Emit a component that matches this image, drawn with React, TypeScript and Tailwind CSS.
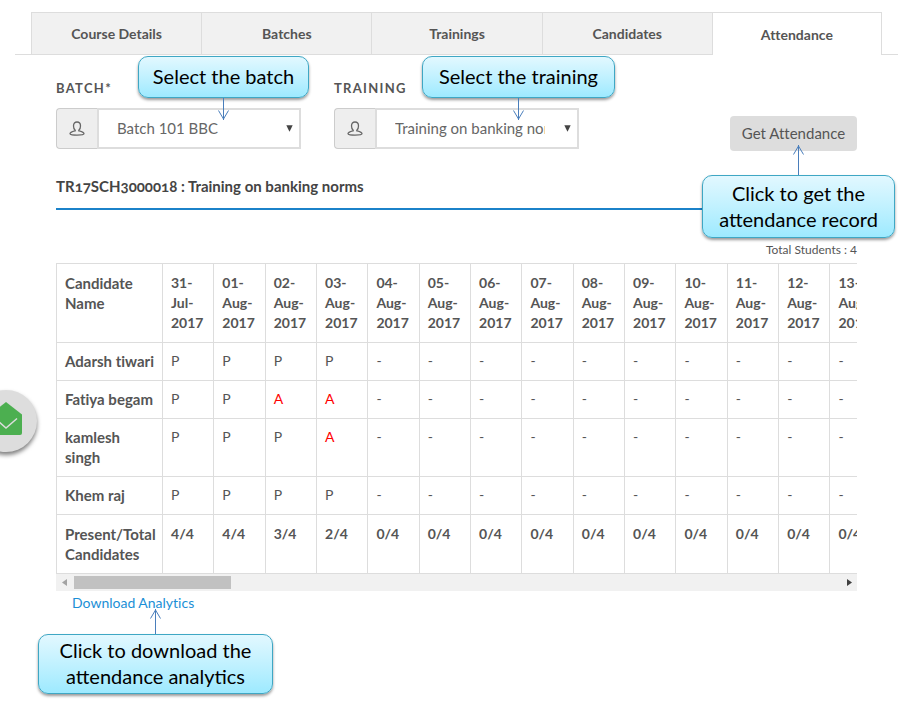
import type { ReactNode } from "react";

const TABS = ["Course Details", "Batches", "Trainings", "Candidates", "Attendance"];

const DAYS = [
  "31-Jul-2017",
  "01-Aug-2017",
  "02-Aug-2017",
  "03-Aug-2017",
  "04-Aug-2017",
  "05-Aug-2017",
  "06-Aug-2017",
  "07-Aug-2017",
  "08-Aug-2017",
  "09-Aug-2017",
  "10-Aug-2017",
  "11-Aug-2017",
  "12-Aug-2017",
  "13-Aug-2017",
];

const STUDENTS = [
  { name: "Adarsh tiwari", marks: "PPPP" },
  { name: "Fatiya begam", marks: "PPAA" },
  { name: "kamlesh singh", marks: "PPPA" },
  { name: "Khem raj", marks: "PPPP" },
];

const CELL = "border border-[#dddddd] pl-2 pb-[9px] text-left align-top";

function PersonIcon() {
  return (
    <svg width="16" height="16" viewBox="0 0 16 16" fill="none" stroke="#666666" strokeWidth="1.3" aria-hidden="true">
      <path d="M6.2 9.2C5 8.2 4.500 6.600 4.500 4.900C4.500 2.500 5.900 1 8 1s3.500 1.500 3.500 3.900c0 1.700-.5 3.300-1.700 4.300v.6c1.800.5 5.200 1.300 5.200 3c0 .9-3.200 1.300-7 1.300s-7-.4-7-1.300c0-1.700 3.400-2.500 5.200-3z" />
    </svg>
  );
}

function Field({ id, label, option }: { id: string; label: string; option: string }) {
  return (
    <div className="w-[245px]">
      <label htmlFor={id} className="block text-[13px] leading-5 font-bold tracking-widest text-[#555555]">
        {label}
      </label>
      <div className="mt-[10px] flex h-[41px]">
        <span className="flex w-[41px] shrink-0 items-center justify-center rounded-l border border-r-0 border-[#cccccc] bg-[#eeeeee]">
          <PersonIcon />
        </span>
        <div className="relative min-w-0 flex-1">
          <select
            id={id}
            className="h-full w-full appearance-none border-2 border-[#dddddd] bg-white pr-8 pl-[18px] text-[15px] text-[#666666]"
          >
            <option>{option}</option>
          </select>
          <svg className="pointer-events-none absolute top-[17px] right-[8px]" width="7" height="7" viewBox="0 0 7 7" aria-hidden="true">
            <path d="M0.300 0.300h6.400L3.500 6.700z" fill="#444444" />
          </svg>
        </div>
      </div>
    </div>
  );
}

function Callout({ className, children }: { className: string; children: ReactNode }) {
  return (
    <div
      className={
        "absolute flex items-center justify-center rounded-[10px] border border-[#3fa7c4] bg-linear-to-b from-[#e2f8ff] to-[#9deaff] pb-[2px] text-center text-[20px] leading-[26px] text-black shadow-[0_2px_3px_rgba(0,0,0,0.4)] " +
        className
      }
    >
      {children}
    </div>
  );
}

function Arrow({ className, height, up = false }: { className: string; height: number; up?: boolean }) {
  const head = up ? "M0.500 9.500L5.500 1L10.500 9.500" : `M0.500 ${height - 9.5}L5.500 ${height - 1}L10.500 ${height - 9.5}`;
  return (
    <svg className={"absolute " + className} width="11" height={height} fill="none" stroke="#4a7ebb" aria-hidden="true">
      <path d={`M5.500 0V${height}`} />
      <path d={head} />
    </svg>
  );
}

export default function App() {
  return (
    <div className="relative min-h-screen overflow-hidden bg-white pt-3 font-['Lato','Liberation_Sans',sans-serif] text-sm text-[#555555]">
      <nav className="mr-[2px] ml-[15px] border-b border-[#dddddd] px-4 [font-variant-ligatures:none]">
        <div className="-mb-px grid grid-cols-5">
          {TABS.map((tab) => (
            <button
              key={tab}
              type="button"
              className={
                tab === "Attendance"
                  ? "h-[43px] border border-b-0 border-[#dddddd] bg-white pt-[2px] font-bold"
                  : "h-[43px] border border-r-0 border-[#dddddd] bg-[#f1f1f1] font-bold"
              }
            >
              {tab}
            </button>
          ))}
        </div>
      </nav>

      <main className="mr-[43px] ml-14 pt-[23px] [font-variant-ligatures:none]">
        <form className="flex items-end gap-[33px]">
          <Field id="batch" label="BATCH*" option="Batch 101 BBC" />
          <Field id="training" label="TRAINING" option="Training on banking norms" />
          <button type="button" className="-mb-[2px] ml-auto h-[35px] w-[127px] rounded bg-[#dddddd] text-[15px] text-[#555555]">
            Get Attendance
          </button>
        </form>

        <h2 className="mt-[25px] border-b-2 border-[#1b82c9] pb-[10px] text-[15px] leading-6 font-bold text-[#444444] [font-variant-numeric:oldstyle-nums]">
          TR17SCH3000018 : Training on banking norms
        </h2>

        <p className="mt-[30px] text-right text-xs leading-5">Total Students : 4</p>

        <div className="mt-[3px] overflow-hidden">
          <table className="w-[826px] table-fixed border-collapse leading-5">
            <thead>
              <tr>
                <th className={CELL + " w-[106px] pt-[9px] pr-1 text-[15px] leading-5"}>Candidate Name</th>
                {DAYS.map((day) => (
                  <th key={day} className={CELL + " pt-[9px] pr-2"}>
                    {day}
                  </th>
                ))}
              </tr>
            </thead>
            <tbody>
              {STUDENTS.map((student) => (
                <tr key={student.name}>
                  <th className={CELL + " pt-2 pr-1 text-[15px] leading-5"}>{student.name}</th>
                  {DAYS.map((day, i) => {
                    const mark = student.marks[i] ?? "-";
                    return (
                      <td key={day} className={CELL + (mark === "A" ? " pt-2 pr-2 text-[#ff0000]" : " pt-2 pr-2")}>
                        {mark}
                      </td>
                    );
                  })}
                </tr>
              ))}
              <tr>
                <th className={CELL + " pt-[9px] pr-1 text-[15px] leading-5"}>Present/Total Candidates</th>
                {DAYS.map((day, i) => (
                  <th key={day} className={CELL + " pt-[9px] pr-2"}>
                    {STUDENTS.filter((student) => student.marks[i] === "P").length}/4
                  </th>
                ))}
              </tr>
            </tbody>
          </table>
          <div className="flex h-[17px] items-center justify-between bg-[#f1f1f1] pr-[5px] pl-[6px]">
            <div className="flex items-center gap-[7px]">
              <svg width="5" height="7" viewBox="0 0 5 7" aria-hidden="true">
                <path d="M5 0v7L0 3.500z" fill="#a3a3a3" />
              </svg>
              <div className="h-[13px] w-[157px] bg-[#c1c1c1]" />
            </div>
            <svg width="5" height="7" viewBox="0 0 5 7" aria-hidden="true">
              <path d="M0 0v7L5 3.500z" fill="#404040" />
            </svg>
          </div>
        </div>

        <a href="#download" className="ml-4 inline-block text-sm leading-6 text-[#1b8fd6]">
          Download Analytics
        </a>
      </main>

      <button
        type="button"
        aria-label="Messages"
        className="absolute top-[390px] -left-[25px] flex size-[62px] items-center justify-center rounded-full bg-[#dddddd] pb-[5px] shadow-[0_3px_4px_rgba(0,0,0,0.5)]"
      >
        <svg width="32" height="33" viewBox="0 0 32 33" aria-hidden="true">
          <path d="M16 0L32 12.500V31a2 2 0 0 1-2 2H2a2 2 0 0 1-2-2V12.500z" fill="#4caf50" />
          <path d="M5 16.500L16 26L27 16.500" fill="none" stroke="#dddddd" strokeWidth="1.500" />
        </svg>
      </button>

      <Callout className="top-14 left-[138px] h-[42px] w-[171px]">Select the batch</Callout>
      <Arrow className="top-[98px] left-[218px]" height={22} />

      <Callout className="top-14 left-[422px] h-[42px] w-[193px]">Select the training</Callout>
      <Arrow className="top-[98px] left-[513px]" height={22} />

      <Arrow className="top-[145px] left-[793px]" height={30} up />
      <Callout className="top-[175px] left-[702px] h-[63px] w-[193px]">
        Click to get the
        <br />
        attendance record
      </Callout>

      <Arrow className="top-[609px] left-[150px]" height={25} up />
      <Callout className="top-[634px] left-[38px] h-[60px] w-[235px]">
        Click to download the
        <br />
        attendance analytics
      </Callout>
    </div>
  );
}
